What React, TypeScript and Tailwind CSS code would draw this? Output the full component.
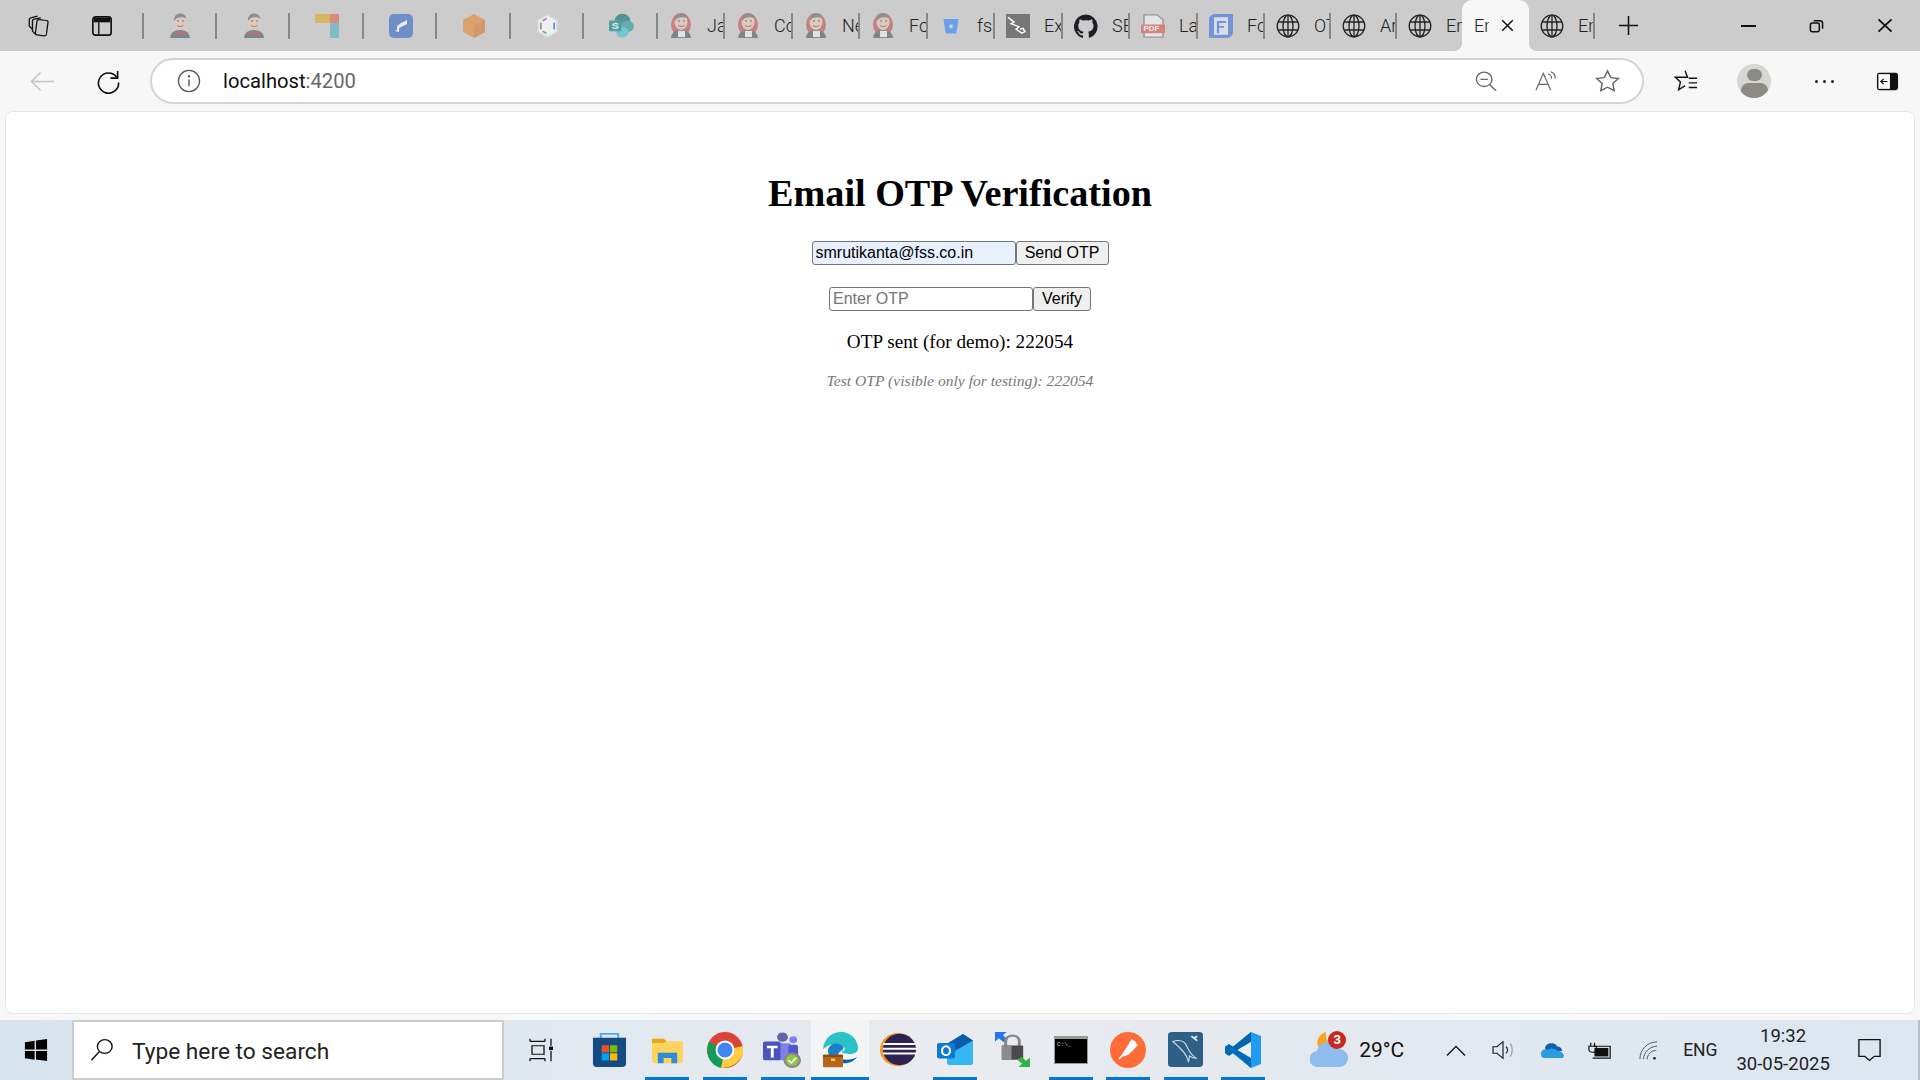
import React from 'react';

const UI_FONT = "font-['Roboto','Liberation_Sans',sans-serif]";

const CollectionsIcon = () => (
  <svg width="24" height="24" viewBox="0 0 26 28" preserveAspectRatio="none" fill="none" stroke="#111" strokeWidth="1.400">
    <rect x="11" y="7" width="12" height="18" rx="2" transform="rotate(7 17 16)" />
    <path d="M10.500 24 7 20V8c0-1 .8-1.800 1.800-2L16 4.500" />
    <path d="M7 18 3.500 14V6.500c0-1 .7-1.800 1.600-2L12.500 2.500" />
  </svg>
);

const TabsIcon = () => (
  <svg width="22" height="22" viewBox="0 0 24 24" fill="none">
    <rect x="2" y="2" width="20" height="20" rx="3" stroke="#111" strokeWidth="1.800" />
    <path d="M3 3h18v5H3z" fill="#111" />
    <path d="M8.500 8v13" stroke="#111" strokeWidth="1.500" />
  </svg>
);

const JenkinsIcon = ({ round }: { round?: boolean }) => (
  <svg width="24" height="25" viewBox="0 0 24 28" preserveAspectRatio="none" className="opacity-60">
    {round && <ellipse cx="12" cy="13" rx="10" ry="13" fill="#c0504d" />}
    <path d="M2 28c.5-6 4-9 10-9s9.500 3 10 9z" fill="#4a5560" />
    <ellipse cx="12" cy="10" rx="6.500" ry="9" fill="#e8c8b4" />
    <path d="M6 9C5.500 3 9 .5 12 .5s6 2 6.500 6C15 4 9.500 4.500 7.500 7z" fill="#666" />
    <circle cx="10" cy="9" r=".9" fill="#333" />
    <circle cx="15" cy="9" r=".9" fill="#333" />
    <path d="M9 14c2 1.500 4.500 1.500 6.500 0" stroke="#7a3b32" fill="none" />
    {round ? <rect x="9" y="20" width="7" height="7" fill="#f0f0f0" /> : <path d="M7 20l5 2 5-2v5l-5-2-5 2z" fill="#c0302b" />}
  </svg>
);

const ColorBlocksIcon = () => (
  <svg width="24" height="24" viewBox="0 0 24 24" className="opacity-60">
    <rect x="0" y="0" width="15" height="9" fill="#dba91f" />
    <rect x="15" y="0" width="9" height="9" fill="#e0604e" />
    <rect x="15" y="9" width="9" height="15" fill="#4fb3c4" />
  </svg>
);

const JiraIcon = () => (
  <svg width="24" height="24" viewBox="0 0 24 24" className="opacity-60">
    <rect width="24" height="24" rx="5" fill="#2f68c4" />
    <path d="M6 17l4-3v4zM8 12l4-3v4l-4 3zM12 9l6-3v4l-6 3z" fill="#fff" />
  </svg>
);

const BoxIcon = () => (
  <svg width="24" height="24" viewBox="0 0 24 24" className="opacity-60">
    <path d="M12 0l11 6v12l-11 6-11-6V6z" fill="#e8872b" />
    <path d="M12 12l11-6v12l-11 6z" fill="#d9772a" />
  </svg>
);

const HexIcon = () => (
  <svg width="21" height="24" viewBox="0 0 22 28" preserveAspectRatio="none" fill="none" strokeWidth="1.800" className="opacity-70">
    <path d="M11 1 21 7v14l-10 6-10-6V7z" fill="#fff" stroke="#ddd" />
    <path d="M6 8l4-3" stroke="#a24dd8" />
    <path d="M18 10v8" stroke="#2b78e4" />
    <path d="M4 10v8" stroke="#777" />
    <path d="M6 20l4 3" stroke="#2db36b" />
  </svg>
);

const SharePointIcon = () => (
  <svg width="25" height="25" viewBox="0 0 26 30" preserveAspectRatio="none" className="opacity-60">
    <circle cx="14" cy="9" r="8" fill="#036c70" />
    <circle cx="19" cy="16" r="7" fill="#1a9ba1" />
    <circle cx="14" cy="23" r="6.500" fill="#37c6d0" />
    <rect x="0" y="9" width="13" height="13" rx="1" fill="#038387" />
    <text x="3" y="19.500" fontSize="11" fontWeight="700" fill="#fff" fontFamily="Liberation Sans">S</text>
  </svg>
);

const BitbucketIcon = () => (
  <svg width="18" height="18" viewBox="0 0 24 26" preserveAspectRatio="none" className="opacity-60">
    <path d="M2 3h20l-3 21H5z" fill="#2684ff" />
    <rect x="10" y="11" width="4" height="5" fill="#cfe2ff" />
  </svg>
);

const WireIcon = () => (
  <svg width="24" height="24" viewBox="0 0 24 30" preserveAspectRatio="none" fill="none">
    <rect width="24" height="30" fill="#777" />
    <path d="M2 4l6 6-3 2 8 4-3 3 6 5 3-2-2-4-3 1" stroke="#fff" strokeWidth="1.600" />
  </svg>
);

const GithubIcon = () => (
  <svg width="24" height="24" viewBox="0 0 24 24" fill="#1b1f23">
    <path d="M12 .5a12 12 0 0 0-3.800 23.400c.6.100.8-.3.800-.6v-2.100c-3.300.7-4-1.600-4-1.600-.6-1.400-1.400-1.800-1.400-1.800-1.100-.7.100-.7.100-.7 1.200.1 1.800 1.200 1.800 1.200 1.100 1.800 2.800 1.300 3.500 1 .1-.8.400-1.300.8-1.600-2.700-.3-5.500-1.300-5.500-5.900 0-1.300.5-2.400 1.200-3.200-.1-.3-.5-1.500.1-3.200 0 0 1-.3 3.300 1.200a11.500 11.500 0 0 1 6 0c2.300-1.500 3.300-1.200 3.300-1.200.6 1.700.2 2.900.1 3.200.8.800 1.200 1.900 1.200 3.200 0 4.600-2.800 5.600-5.500 5.900.4.400.8 1.100.8 2.200v3.300c0 .3.200.7.800.6A12 12 0 0 0 12 .5z" />
  </svg>
);

const PdfIcon = () => (
  <svg width="24" height="24" viewBox="0 0 24 30" preserveAspectRatio="none" className="opacity-60">
    <path d="M3 1h13l6 6v22H3z" fill="#f4f4f4" stroke="#777" strokeWidth="1.500" />
    <rect x="0" y="13" width="24" height="11" rx="1" fill="#d9534f" />
    <text x="2.500" y="21.500" fontSize="8" fontWeight="700" fill="#fff" fontFamily="Liberation Sans">PDF</text>
  </svg>
);

const FormIcon = () => (
  <svg width="24" height="24" viewBox="0 0 24 30" preserveAspectRatio="none" fill="none" className="opacity-60">
    <path d="M6 0h18v22c0 5-3 8-6 8H0V7c0-4 3-7 6-7z" fill="#3b6fdc" />
    <path d="M5 4h14v22H5z" fill="#dfe8fb" />
    <path d="M9 24V10h8M9 16h6" stroke="#3b6fdc" strokeWidth="2.200" />
  </svg>
);

const GlobeIcon = () => (
  <svg width="24" height="24" viewBox="0 0 24 24" fill="none" stroke="#222" strokeWidth="1.300">
    <circle cx="12" cy="12" r="10.800" />
    <ellipse cx="12" cy="12" rx="5" ry="10.800" />
    <path d="M12 1.200v21.600M2.200 8h19.600M2.200 16h19.600" />
  </svg>
);

const CloseIcon = ({ w = 16, h = 16, stroke = 1.800 }: { w?: number; h?: number; stroke?: number }) => (
  <svg width={w} height={h} viewBox="0 0 16 16" preserveAspectRatio="none" stroke="#111" strokeWidth={stroke} fill="none">
    <path d="M1.500 1.500l13 13M14.500 1.500l-13 13" />
  </svg>
);

interface TabInfo {
  width: string;
  icon: React.ReactNode;
  label?: string;
  noBorder?: boolean;
}

const tabs: TabInfo[] = [
  { width: 'w-[74px]', icon: <JenkinsIcon /> },
  { width: 'w-[73px]', icon: <JenkinsIcon /> },
  { width: 'w-[74px]', icon: <ColorBlocksIcon /> },
  { width: 'w-[73px]', icon: <JiraIcon /> },
  { width: 'w-[74px]', icon: <BoxIcon /> },
  { width: 'w-[73px]', icon: <HexIcon /> },
  { width: 'w-[74px]', icon: <SharePointIcon /> },
  { width: 'w-[67px]', icon: <JenkinsIcon round />, label: 'Jav' },
  { width: 'w-[68px]', icon: <JenkinsIcon round />, label: 'Cod' },
  { width: 'w-[67px]', icon: <JenkinsIcon round />, label: 'Nex' },
  { width: 'w-[68px]', icon: <JenkinsIcon round />, label: 'Fol' },
  { width: 'w-[67px]', icon: <BitbucketIcon />, label: 'fsss' },
  { width: 'w-[68px]', icon: <WireIcon />, label: 'Exp' },
  { width: 'w-[67px]', icon: <GithubIcon />, label: 'SBI' },
  { width: 'w-[68px]', icon: <PdfIcon />, label: 'Lat' },
  { width: 'w-[67px]', icon: <FormIcon />, label: 'For' },
  { width: 'w-[66px]', icon: <GlobeIcon />, label: 'OT' },
  { width: 'w-[66px]', icon: <GlobeIcon />, label: 'Ar' },
  { width: 'w-[65px]', icon: <GlobeIcon />, label: 'Em', noBorder: true },
];

const Tab = ({ width, icon, label, noBorder }: TabInfo) => (
  <div className={`${width} relative h-full flex items-center ${label ? 'pl-[10px]' : 'justify-center'} overflow-hidden shrink-0`}>
    <div className="w-[25px] flex justify-center shrink-0">{icon}</div>
    {label && (
      <span className="ml-[14px] text-[18px] leading-none text-[#222] font-light whitespace-nowrap">{label}</span>
    )}
    {!noBorder && <div className="absolute right-0 top-[13px] w-[2px] h-[26px] bg-[#888]" />}
  </div>
);

const TabStrip = () => (
  <div className="h-[51px] bg-[#cccccc] flex items-stretch shrink-0">
    <div className="w-[143px] shrink-0 flex items-center relative">
      <div className="w-[76px] flex justify-center"><CollectionsIcon /></div>
      <div className="w-[51px] flex justify-center"><TabsIcon /></div>
      <div className="absolute right-[-1px] top-[13px] w-[2px] h-[26px] bg-[#888]" />
    </div>
    {tabs.map((t, i) => (
      <Tab key={i} {...t} />
    ))}
    {/* active tab */}
    <div className="relative w-[67px] shrink-0 bg-[#f7f7f7] rounded-t-[10px] flex items-center pl-[12px] gap-[12px]">
      <svg className="absolute left-[-8px] bottom-0" width="8" height="8" viewBox="0 0 8 8"><path d="M8 0v8H0c4 0 8-3 8-8z" fill="#f7f7f7" /></svg>
      <svg className="absolute right-[-8px] bottom-0" width="8" height="8" viewBox="0 0 8 8"><path d="M0 0v8h8C4 8 0 5 0 0z" fill="#f7f7f7" /></svg>
      <span className="w-[15px] overflow-hidden text-[18px] leading-none text-[#222] font-light">Em</span>
      <CloseIcon w={13} h={13} />
    </div>
    <Tab width="w-[66px]" icon={<GlobeIcon />} label="Em" />
    <div className="w-[66px] flex items-center justify-center shrink-0">
      <svg width="21" height="21" viewBox="0 0 22 22" stroke="#111" strokeWidth="1.600"><path d="M11 1v20M1 11h20" /></svg>
    </div>
    <div className="grow" />
    <div className="flex items-center shrink-0">
      <div className="w-[69px] flex justify-center"><div className="w-[15px] h-[2px] bg-[#111]" /></div>
      <div className="w-[69px] flex justify-center pr-[2px]">
        <svg width="15" height="14" viewBox="0 0 16 16" preserveAspectRatio="none" fill="none" stroke="#111" strokeWidth="1.600">
          <rect x="1.500" y="4.500" width="9.500" height="10" rx="2" />
          <path d="M5 2h6.500c1.500 0 3 1.200 3 3v6" />
        </svg>
      </div>
      <div className="w-[68px] flex justify-center pr-[2px]"><CloseIcon w={16} h={15} /></div>
    </div>
  </div>
);

const Toolbar = () => (
  <div className="h-[60px] flex items-center shrink-0">
    <div className="w-[150px] flex items-center shrink-0">
      <div className="w-[84px] flex justify-center">
        <svg width="25" height="21" viewBox="0 0 26 22" preserveAspectRatio="none" fill="none" stroke="#c4c4c4" strokeWidth="1.500"><path d="M25 11H1.500M11 1.500 1.500 11l9.500 9.500" /></svg>
      </div>
      <div className="w-[48px] flex justify-center">
        <svg width="25" height="25" viewBox="0 0 26 26" fill="none" stroke="#111" strokeWidth="1.700">
          <path d="M21.500 8.500A10.500 10.500 0 1 0 23.500 14" />
          <path d="M22.500 2v7.500H15" />
        </svg>
      </div>
    </div>
    <div className="w-[1494px] h-[46px] bg-white border-2 border-[#d4d4d4] rounded-full flex items-center shrink-0">
      <div className="w-[33px] ml-[20px] flex justify-center">
        <svg width="24" height="24" viewBox="0 0 25 25" fill="none" stroke="#555" strokeWidth="1.300">
          <circle cx="12.500" cy="12.500" r="11" />
          <path d="M12.500 11v7" strokeWidth="1.500" />
          <circle cx="12.500" cy="7.500" r=".6" fill="#555" />
        </svg>
      </div>
      <div className="ml-[18px] text-[20.200px] leading-none text-[#111]">
        localhost<span className="text-[#666]">:4200</span>
      </div>
      <div className="grow" />
      <svg width="22" height="22" viewBox="0 0 24 26" preserveAspectRatio="none" fill="none" stroke="#666" strokeWidth="1.500">
        <circle cx="10" cy="11" r="8.500" /><path d="M6 11h8M16 17.500l7 7" />
      </svg>
      <svg className="ml-[38px]" width="24" height="22" viewBox="0 0 26 26" preserveAspectRatio="none" fill="none" stroke="#666" strokeWidth="1.300">
        <path d="M1 24 9 4l8 20M4 17h10" /><path d="M14 5c2 0 4 2 4 5M17 2c3 1 5 4 5 8" />
      </svg>
      <svg className="ml-[36px] mr-[22px]" width="25" height="24" viewBox="0 0 26 26" preserveAspectRatio="none" fill="none" stroke="#666" strokeWidth="1.500">
        <path d="M13 2l3.400 7.300 7.900 1-5.800 5.400 1.500 7.800L13 19.700l-7 3.800 1.500-7.800L1.700 10.300l7.900-1z" />
      </svg>
    </div>
    <div className="w-[85px] pr-[2px] flex justify-center shrink-0">
      <svg width="24" height="24" viewBox="0 0 26 26" fill="none" stroke="#111" strokeWidth="1.500">
        <path d="M12 2l2.600 7H1.500l5.500 5-2 8.500L12 18M16 10h9M16 15h9M16 20h9" />
      </svg>
    </div>
    <div className="w-[50px] flex justify-center shrink-0">
      <div className="w-[34px] h-[34px] rounded-full bg-[#d6d6d2] overflow-hidden flex flex-col items-center">
        <div className="w-[15px] h-[16px] mt-[5px] rounded-full bg-[#8b8a85]" />
        <div className="w-[27px] h-[20px] mt-[2px] rounded-full bg-[#8b8a85]" />
      </div>
    </div>
    <div className="w-[92px] pr-[2px] flex justify-center gap-[5px] shrink-0">
      <div className="w-[3px] h-[3px] bg-[#222] rounded-full" />
      <div className="w-[3px] h-[3px] bg-[#222] rounded-full" />
      <div className="w-[3px] h-[3px] bg-[#222] rounded-full" />
    </div>
    <div className="w-[32px] flex justify-center shrink-0">
      <svg width="23" height="19" viewBox="0 0 24 22" preserveAspectRatio="none">
        <rect x="1" y="1" width="22" height="20" rx="2.500" fill="#111" />
        <rect x="2.500" y="2.500" width="12" height="17" fill="#fff" />
        <path d="M12 11H5M8 8l-3 3 3 3" stroke="#111" strokeWidth="1.300" fill="none" />
      </svg>
    </div>
  </div>
);

const inputClass =
  "h-[24px] w-[204px] border border-[#767676] rounded-[3px] px-[3px] text-[16px] font-['Liberation_Sans',sans-serif] text-black placeholder:text-[#757575] outline-none shrink-0";
const buttonClass =
  "h-[24px] border border-[#767676] rounded-[3px] bg-[#efefef] text-[16px] font-['Liberation_Sans',sans-serif] text-black leading-none flex items-center justify-center shrink-0";

const Page = () => (
  <div className="grow mx-[5px] mb-[6px] bg-white rounded-[8px] border border-[#e6e6e6] font-['Liberation_Serif',serif] text-center overflow-hidden">
    <h1 className="mt-[59px] text-[38.200px] leading-[44px] font-bold text-black">Email OTP Verification</h1>
    <div className="mt-[26px] flex justify-center">
      <input readOnly value="smrutikanta@fss.co.in" className={`${inputClass} bg-[#e8f0fe]`} />
      <button className={`${buttonClass} w-[93px]`}>Send OTP</button>
    </div>
    <div className="mt-[22px] flex justify-center">
      <input readOnly placeholder="Enter OTP" className={`${inputClass} bg-white`} />
      <button className={`${buttonClass} w-[58px]`}>Verify</button>
    </div>
    <p className="mt-[20px] text-[19.200px] leading-[22px] text-black">OTP sent (for demo): 222054</p>
    <p className="mt-[19px] text-[15.600px] leading-[17px] italic text-[#777]">Test OTP (visible only for testing): 222054</p>
  </div>
);

const StoreIcon = () => (
  <svg width="35" height="36" viewBox="0 0 36 38" preserveAspectRatio="none">
    <path d="M9 8V2h18v6" fill="none" stroke="#3fb1e8" strokeWidth="2" />
    <path d="M1 6h34v27a4 4 0 0 1-4 4H5a4 4 0 0 1-4-4z" fill="#164a85" />
    <rect x="10" y="14" width="7.500" height="7.500" fill="#f25022" />
    <rect x="18.500" y="14" width="7.500" height="7.500" fill="#7fba00" />
    <rect x="10" y="22.500" width="7.500" height="7.500" fill="#00a4ef" />
    <rect x="18.500" y="22.500" width="7.500" height="7.500" fill="#ffb900" />
  </svg>
);

const FolderIcon = () => (
  <svg width="33" height="28" viewBox="0 0 34 32" preserveAspectRatio="none">
    <path d="M1 3h12l3 3h17v22a3 3 0 0 1-3 3H4a3 3 0 0 1-3-3z" fill="#ffd45e" />
    <path d="M1 3h12l3 3-3 2H1z" fill="#e5a812" />
    <path d="M7 19h20v12h-6v-6h-8v6H7z" fill="#2f8dd8" />
  </svg>
);

const ChromeIcon = () => (
  <svg width="36" height="36" viewBox="0 0 36 36">
    <circle cx="18" cy="18" r="18" fill="#db4437" />
    <path d="M18 18 2 10C-3 22 4 34 14 36z" fill="#0f9d58" />
    <path d="M18 18 36 14c2 10-5 21-22 22z" fill="#ffcd40" />
    <circle cx="18" cy="18" r="9.500" fill="#fff" />
    <circle cx="18" cy="18" r="7.500" fill="#4285f4" />
  </svg>
);

const TeamsIcon = () => (
  <svg width="39" height="36" viewBox="0 0 40 42" preserveAspectRatio="none">
    <circle cx="20" cy="6" r="5.500" fill="#6264a7" />
    <circle cx="31" cy="9" r="4" fill="#7b83eb" />
    <rect x="13" y="13" width="16" height="20" rx="3" fill="#7b83eb" />
    <rect x="26" y="15" width="10" height="16" rx="3" fill="#5059c9" />
    <rect x="0" y="11" width="18" height="22" rx="2" fill="#4b53bc" />
    <path d="M4 16h11v3h-4v11H8V19H4z" fill="#fff" />
    <circle cx="30" cy="33" r="9" fill="#888" />
    <circle cx="30" cy="33" r="6.500" fill="#92c83e" />
    <path d="M26 33l3 3 5-6" stroke="#fff" strokeWidth="1.800" fill="none" />
  </svg>
);

const EdgeIcon = () => (
  <svg width="36" height="36" viewBox="0 0 36 46" preserveAspectRatio="none">
    <path d="M1 22C2 8 10 0 19 0s17 9 17 21c0 5-4 7-9 7-4 0-7-1-7-3 3-1 4-4 1-7-6-5-14-3-20 4z" fill="#29c3c6" />
    <path d="M6 24c0-7 7-13 14-7 3 3 1 6-2 8-3 3-2 8 3 10-9 1-15-3-15-11z" fill="#1b7fcb" />
    <path d="M15 38c6 4 16 2 20-6-3 3-12 5-16 2z" fill="#0e5fa3" />
    <rect x="1" y="29" width="20" height="16" rx="1" fill="#b4661c" />
    <rect x="1" y="29" width="20" height="3" fill="#8a4c12" />
    <rect x="9" y="34" width="4" height="3" fill="#fcd34d" />
  </svg>
);

const EclipseIcon = () => (
  <svg width="36" height="33" viewBox="0 0 36 42" preserveAspectRatio="none">
    <ellipse cx="18" cy="21" rx="18" ry="21" fill="#f7941e" />
    <ellipse cx="19.500" cy="21" rx="16.500" ry="20" fill="#2c2255" />
    <path d="M3 14h33M3 20h33M3 26h33" stroke="#fff" strokeWidth="2.500" />
  </svg>
);

const OutlookIcon = () => (
  <svg width="36" height="31" viewBox="0 0 36 38" preserveAspectRatio="none">
    <path d="M10 12 26 0l10 8v28a2 2 0 0 1-2 2H12a2 2 0 0 1-2-2z" fill="#35b8f1" />
    <path d="M10 12 26 0l10 8-20 14z" fill="#0a5ca8" />
    <rect x="0" y="11" width="18" height="19" rx="2" fill="#0f78d4" />
    <ellipse cx="9" cy="20.500" rx="4" ry="5.500" fill="none" stroke="#fff" strokeWidth="2.200" />
  </svg>
);

const LockIcon = () => (
  <svg width="35" height="35" viewBox="0 0 36 44" preserveAspectRatio="none">
    <path d="M0 0h12l-4 4 5 5-4 4-5-5-4 4z" fill="#1f77e8" />
    <path d="M11 18v-6c0-10 14-10 14 0v6" fill="none" stroke="#888" strokeWidth="3" />
    <rect x="7" y="17" width="22" height="18" rx="1" fill="#4a4a4a" />
    <rect x="7" y="17" width="10" height="18" fill="#8c8c8c" />
    <path d="M36 44H24l4-4-5-5 4-4 5 5 4-4z" fill="#33b249" />
  </svg>
);

const CmdIcon = () => (
  <svg width="34" height="28" viewBox="0 0 34 28">
    <rect width="34" height="28" fill="#999" />
    <rect x="1" y="3" width="32" height="24" fill="#000" />
    <text x="3" y="10" fontSize="6" fill="#ccc" fontFamily="Liberation Mono">C:\_</text>
  </svg>
);

const PostmanIcon = () => (
  <svg width="36" height="36" viewBox="0 0 36 36">
    <circle cx="18" cy="18" r="18" fill="#ff6c37" />
    <path d="M9 27 25 9M22 8l5 5-9 9-6 2z" stroke="#fff" strokeWidth="1.600" fill="#fff" />
  </svg>
);

const MySqlIcon = () => (
  <svg width="35" height="35" viewBox="0 0 36 44" preserveAspectRatio="none">
    <rect width="36" height="44" rx="4" fill="#2e5f86" />
    <path d="M5 12c6-3 12-1 14 5 2 5 3 10 10 16-2 0-5-1-7-3 0 3 0 5-1 7-1-5-3-9-5-12-4-6-7-9-11-13z" fill="none" stroke="#cfdde8" strokeWidth="1.200" />
    <path d="M24 5l6 6M30 5l-3 3" stroke="#e6edf3" strokeWidth="2" />
  </svg>
);

const VSCodeIcon = () => (
  <svg width="36" height="36" viewBox="0 0 36 44" preserveAspectRatio="none">
    <path d="M26 0 36 5v34l-10 5L8 26l-4 3-4-3v-8l4-3 4 3z" fill="#1f9cf0" />
    <path d="M26 12v20L12 22z" fill="#eceef2" />
    <path d="M26 0v12L12 22 4 29l-4-3v-8l4-3 4 3zM26 32v12L12 29l-4-3 4-4z" fill="#0065a9" />
    <path d="M4 15l22 17v12l-18-18-8 0v-8z" fill="#0078c8" opacity=".35" />
  </svg>
);

const TaskItem = ({
  children,
  running,
  active,
}: {
  children: React.ReactNode;
  running?: boolean;
  active?: boolean;
}) => (
  <div className={`w-[57.600px] h-full flex flex-col items-center shrink-0 ${active ? 'bg-[#f3f4f6]' : ''}`}>
    <div className="grow pt-[2px] flex items-center justify-center">{children}</div>
    <div className={`h-[3px] ${active ? 'w-full' : 'w-[44px]'} ${running ? 'bg-[#0078d4]' : ''}`} />
  </div>
);

const Taskbar = () => (
  <div className={`h-[60px] shrink-0 flex items-stretch bg-gradient-to-r from-[#d6e4f0] via-[#e9ebef] to-[#dbe6ef] ${UI_FONT}`}>
    <div className="w-[72px] flex items-center justify-center shrink-0">
      <svg width="24" height="24" viewBox="0 0 26 26" fill="#000">
        <path d="M1 4.500 11.500 3v9.500H1zM13 2.800 25 1v11.500H13zM1 14h10.500v9.500L1 22zM13 14h12v11l-12-1.700z" />
      </svg>
    </div>
    <div className="w-[432px] shrink-0 bg-white border-2 border-[#cccccc] flex items-center pl-[16px]">
      <svg width="24" height="24" viewBox="0 0 26 28" preserveAspectRatio="none" fill="none" stroke="#111" strokeWidth="1.500">
        <circle cx="16" cy="10" r="8" /><path d="M10 16 1.500 26" />
      </svg>
      <span className="ml-[18px] pt-[5px] text-[22.700px] leading-none text-[#222]">Type here to search</span>
    </div>
    <div className="w-[77px] pr-[4px] flex items-center justify-center shrink-0">
      <svg width="24" height="24" viewBox="0 0 24 28" preserveAspectRatio="none" fill="none" stroke="#111" strokeWidth="1.300">
        <path d="M1 4h15M1 24h15M3 9h12v10H3zM1 27v-3M16 27v-3M1 1v3M16 1v3M22 1v8M22 15v12" />
        <rect x="20" y="10" width="4" height="4" fill="#111" stroke="none" />
      </svg>
    </div>
    <TaskItem><StoreIcon /></TaskItem>
    <TaskItem running><FolderIcon /></TaskItem>
    <TaskItem running><ChromeIcon /></TaskItem>
    <TaskItem running><TeamsIcon /></TaskItem>
    <TaskItem running active><EdgeIcon /></TaskItem>
    <TaskItem><EclipseIcon /></TaskItem>
    <TaskItem running><OutlookIcon /></TaskItem>
    <TaskItem><LockIcon /></TaskItem>
    <TaskItem running><CmdIcon /></TaskItem>
    <TaskItem running><PostmanIcon /></TaskItem>
    <TaskItem running><MySqlIcon /></TaskItem>
    <TaskItem running><VSCodeIcon /></TaskItem>

    <div className="ml-[38px] flex items-center w-[126px] shrink-0 relative">
      <svg width="38" height="36" viewBox="0 0 38 36">
        <path d="M16 0a11 11 0 1 0 12 16A14 14 0 0 1 16 0z" fill="#f8a623" />
        <path d="M8 35a8 8 0 0 1-1-16 11 11 0 0 1 21-2 9 9 0 0 1 2 18z" fill="#90bdf0" />
      </svg>
      <span className="absolute left-[18px] top-[11px] w-[18px] h-[18px] rounded-full bg-[#c8281e] text-white text-[13px] leading-[18px] text-center font-bold">3</span>
      <span className="ml-[11px] text-[21px] leading-none text-[#111]">29°C</span>
    </div>
    <div className="w-[40px] flex items-center justify-center shrink-0">
      <svg width="20" height="11" viewBox="0 0 20 12" preserveAspectRatio="none" fill="none" stroke="#111" strokeWidth="1.400"><path d="M1 11.500 10 1.500l9 10" /></svg>
    </div>
    <div className="w-[54px] flex items-center justify-center shrink-0">
      <svg width="22" height="20" viewBox="0 0 22 24" preserveAspectRatio="none" fill="none" stroke="#222" strokeWidth="1.200">
        <path d="M1 8h4l6-6v20l-6-6H1zM14 8c2 2 2 6 0 8" /><path d="M18 4c3 4 3 12 0 16" stroke="#999" />
      </svg>
    </div>
    <div className="w-[44px] flex items-center justify-center shrink-0">
      <svg width="25" height="16" viewBox="0 0 26 18" preserveAspectRatio="none">
        <path d="M5 7a7 7 0 0 1 13-2 5 5 0 0 1 5 5L9 11z" fill="#0f5fb5" />
        <path d="M1 13c0-4 4-6 7-4 3-3 9-2 10 1 4 0 7 3 7 6-1 2-2 2-3 2H4c-2 0-3-2-3-5z" fill="#2a9cdf" />
      </svg>
    </div>
    <div className="w-[52px] flex items-center justify-center shrink-0">
      <svg width="24" height="17" viewBox="0 0 26 20" preserveAspectRatio="none" fill="none">
        <path d="M3 1v4M7 1v4M1 5h8v4c0 2-2 3-4 3s-4-1-4-3z" stroke="#111" strokeWidth="1.300" />
        <path d="M6 5h18v14H5" stroke="#111" strokeWidth="1.300" />
        <rect x="7" y="7" width="15" height="10" fill="#111" />
      </svg>
    </div>
    <div className="w-[46px] flex items-center justify-center shrink-0">
      <svg width="20" height="19" viewBox="0 0 22 22" preserveAspectRatio="none" fill="none" stroke="#555" strokeWidth="1.100">
        <path d="M1 21C1 10 9 1 20 1M5 21c0-8 7-15 15-15M9 21c0-5 4-10 10-10" />
        <circle cx="17" cy="20" r="1.500" fill="#222" stroke="none" />
      </svg>
    </div>
    <div className="ml-[11px] w-[36px] text-[17.500px] text-[#222] flex items-center shrink-0">ENG</div>
    <div className="w-[116px] ml-[6px] flex flex-col items-center justify-center text-[18.500px] leading-[28px] text-[#222] shrink-0">
      <span>19:32</span>
      <span>30-05-2025</span>
    </div>
    <div className="w-[56px] flex items-center justify-center shrink-0">
      <svg width="25" height="24" viewBox="0 0 26 30" preserveAspectRatio="none" fill="none" stroke="#111" strokeWidth="1.400">
        <path d="M2 2h22v21h-6l-5 5-5-5H2z" />
      </svg>
    </div>
    <div className="grow" />
    <div className="w-[2px] ml-[1px] bg-[#b8c0c8] shrink-0" />
  </div>
);

export default function App() {
  return (
    <div className={`w-full h-screen flex flex-col bg-[#f7f7f7] overflow-hidden ${UI_FONT}`}>
      <TabStrip />
      <Toolbar />
      <Page />
      <Taskbar />
    </div>
  );
}
